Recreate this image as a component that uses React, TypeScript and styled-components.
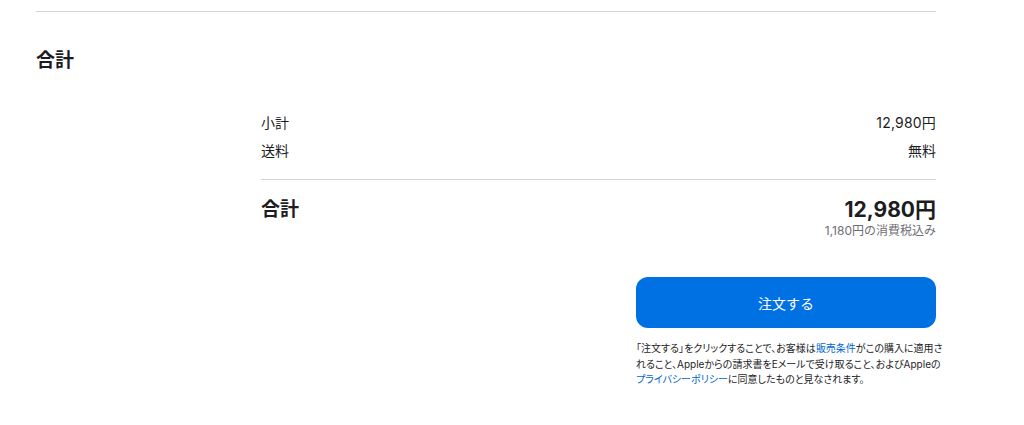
import React from 'react';
import styled, { createGlobalStyle } from 'styled-components';

const GlobalStyle = createGlobalStyle`
  body {
    margin: 0;
    background: #fff;
    color: #1d1d1f;
    font-family: Inter, "Noto Sans CJK JP", sans-serif;
    -webkit-font-smoothing: antialiased;
  }
`;

const Section = styled.section`
  margin-left: 36px;
  width: 900px;
  margin-top: 11px;
  border-top: 1px solid #d2d2d7;
  padding-top: 37px;
`;

const Title = styled.h2`
  margin: 0;
  font-size: 19px;
  line-height: 23px;
  font-weight: 700;
`;

const Summary = styled.div`
  margin-left: 225px;
  margin-top: 37px;
`;

const Row = styled.div`
  display: flex;
  justify-content: space-between;
  font-size: 14px;
  line-height: 28px;
`;

const Amount = styled.span`
  letter-spacing: 0.2px;
`;

const Divider = styled.hr`
  margin: 14px 0 0;
  border: 0;
  border-top: 1px solid #d2d2d7;
`;

const TotalRow = styled.div`
  display: flex;
  justify-content: space-between;
  align-items: flex-start;
  padding-top: 17px;
`;

const TotalLabel = styled.div`
  font-size: 19px;
  line-height: 26px;
  font-weight: 700;
`;

const TotalValue = styled.div`
  text-align: right;
`;

const Price = styled.div`
  font-size: 21px;
  line-height: 26px;
  font-weight: 700;
`;

const Tax = styled.div`
  font-size: 12px;
  line-height: 16px;
  color: #6e6e73;
`;

const Checkout = styled.div`
  width: 300px;
  margin: 38px 0 0 auto;
`;

const OrderButton = styled.button`
  display: block;
  width: 100%;
  height: 51px;
  border: 0;
  border-radius: 12px;
  background: #0071e3;
  color: #fff;
  font-family: inherit;
  font-size: 14px;
  cursor: pointer;
`;

const Note = styled.p`
  margin: 13px 0 0;
  font-size: 10px;
  line-height: 15.5px;
  font-feature-settings: "palt";
  white-space: nowrap;
`;

const NoteLink = styled.a`
  color: #0066cc;
  text-decoration: none;
`;

export default function App() {
  return (
    <>
      <GlobalStyle />
      <Section>
        <Title>合計</Title>
        <Summary>
          <Row>
            <span>小計</span>
            <Amount>12,980円</Amount>
          </Row>
          <Row>
            <span>送料</span>
            <span>無料</span>
          </Row>
          <Divider />
          <TotalRow>
            <TotalLabel>合計</TotalLabel>
            <TotalValue>
              <Price>12,980円</Price>
              <Tax>1,180円の消費税込み</Tax>
            </TotalValue>
          </TotalRow>
          <Checkout>
            <OrderButton>注文する</OrderButton>
            <Note>
              「注文する」をクリックすることで、お客様は<NoteLink href="#">販売条件</NoteLink>がこの購入に適用さ
              <br />
              れること、Appleからの請求書をEメールで受け取ること、およびAppleの
              <br />
              <NoteLink href="#">プライバシーポリシー</NoteLink>に同意したものと見なされます。
            </Note>
          </Checkout>
        </Summary>
      </Section>
    </>
  );
}
